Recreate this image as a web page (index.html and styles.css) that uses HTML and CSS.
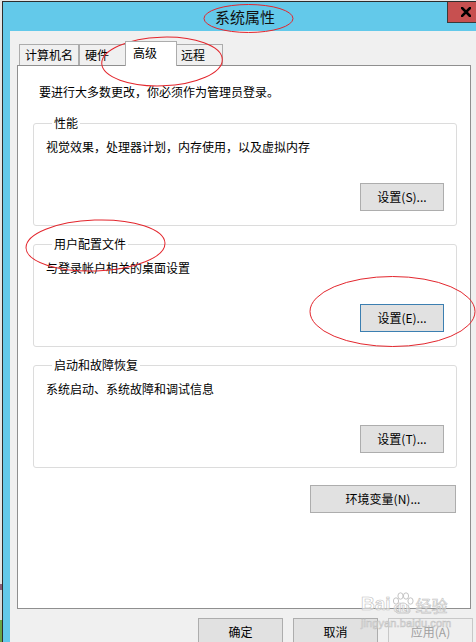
FILE: index.html
```html
<!DOCTYPE html>
<html lang="zh-CN">
<head>
<meta charset="utf-8">
<title>系统属性</title>
<link rel="stylesheet" href="styles.css">
</head>
<body>
<div class="screen">
  <div class="window">
    <div class="titlebar">
      <span class="title">系统属性</span>
      <div class="close">
        <svg width="10" height="10" viewBox="0 0 10 10"><path d="M1 1L9 9M9 1L1 9" stroke="#000" stroke-width="2.6" stroke-linecap="square"/></svg>
      </div>
    </div>
    <div class="client">
      <div class="tabs">
        <div class="tab t1">计算机名</div>
        <div class="tab t2">硬件</div>
        <div class="tab active">高级</div>
        <div class="tab t4">远程</div>
      </div>
      <div class="panel">
        <p class="note">要进行大多数更改，你必须作为管理员登录。</p>
        <fieldset class="group">
          <legend>性能</legend>
          <p class="desc">视觉效果，处理器计划，内存使用，以及虚拟内存</p>
          <div class="btnrow"><button class="btn">设置(S)...</button></div>
        </fieldset>
        <fieldset class="group">
          <legend>用户配置文件</legend>
          <p class="desc">与登录帐户相关的桌面设置</p>
          <div class="btnrow"><button class="btn focus">设置(E)...</button></div>
        </fieldset>
        <fieldset class="group">
          <legend>启动和故障恢复</legend>
          <p class="desc">系统启动、系统故障和调试信息</p>
          <div class="btnrow"><button class="btn">设置(T)...</button></div>
        </fieldset>
        <div class="envrow"><button class="btn env">环境变量(N)...</button></div>
      </div>
      <div class="actions">
        <button class="btn big">确定</button>
        <button class="btn big">取消</button>
        <button class="btn big disabled">应用(A)</button>
      </div>
    </div>
  </div>

  <div class="watermark">
    <div class="wm-top">
      <span class="wm-bai">Bai</span>
      <span class="wm-du">
        <svg class="paw" width="24" height="22" viewBox="0 0 24 22">
          <g fill="none" stroke="#c4c4c4" stroke-width="1">
            <ellipse cx="5" cy="9" rx="2.6" ry="3.2"/>
            <ellipse cx="9.5" cy="4" rx="2.6" ry="3.2"/>
            <ellipse cx="15" cy="4" rx="2.6" ry="3.2"/>
            <ellipse cx="19.5" cy="9" rx="2.6" ry="3.2"/>
            <path d="M12 11c-4 0-7 5-7 8 0 2 2 2.5 4 2h6c2 .5 4 0 4-2 0-3-3-8-7-8z"/>
          </g>
        </svg>
        <span class="du">du</span>
      </span>
      <span class="wm-jy">经验</span>
    </div>
    <div class="wm-url">jingyan.baidu.com</div>
  </div>

  <svg class="marks" width="476" height="642" viewBox="0 0 476 642">
    <g fill="none" stroke="#e3262d" stroke-width="1">
      <ellipse cx="248.5" cy="18.5" rx="44.5" ry="14"/>
      <ellipse cx="162" cy="61.5" rx="60.3" ry="24.3" transform="rotate(-2 162 61.5)"/>
      <ellipse cx="95.5" cy="245.5" rx="69.5" ry="25.5" transform="rotate(-2 95.5 245.5)"/>
      <ellipse cx="392.5" cy="311.5" rx="82.5" ry="35"/>
    </g>
  </svg>
</div>
</body>
</html>
```

FILE: styles.css
```css
* { box-sizing: border-box; }

html, body {
  margin: 0;
  padding: 0;
}

body {
  font-family: "Noto Sans CJK SC", "Noto Sans", sans-serif;
  font-size: 12px;
  color: #000;
}

.screen {
  position: relative;
  width: 476px;
  height: 642px;
  overflow: hidden;
  background: linear-gradient(to bottom, #e6e6e6 0, #e6e6e6 584px, #8b5f7a 584px, #8b5f7a 590px, #d9d9d9 590px, #d9d9d9 620px, #6aa544 620px);
}

.window {
  margin: 1px 0 0 2px;
  width: 486px;
  height: 700px;
  border: 1px solid #2d2d2d;
  background: #63c9ea;
  display: flex;
  flex-direction: column;
}

.titlebar {
  height: 29px;
  flex: none;
  display: grid;
  grid-template-columns: 1fr auto 1fr;
  align-items: center;
}

.title {
  grid-column: 2;
  font-size: 15px;
  line-height: 20px;
  color: #111;
}

.close {
  grid-column: 3;
  justify-self: end;
  align-self: start;
  width: 40px;
  height: 21px;
  background: #c75050;
  border-left: 1px solid #3a3a3a;
  border-bottom: 1px solid #3a3a3a;
  display: flex;
  align-items: center;
  justify-content: center;
  padding-right: 4px;
}

.close svg { display: block; }

.client {
  flex: 1;
  margin: 0 7px;
  background: #f0f0f0;
  padding-top: 10px;
}

/* Tabs */
.tabs {
  display: flex;
  align-items: flex-end;
  height: 24px;
  margin-left: 9px;
}

.tab {
  height: 21px;
  border: 1px solid #acacac;
  border-bottom: none;
  background: #f0f0f0;
  line-height: 19px;
  white-space: nowrap;
}

.t1 { width: 60px; padding-left: 5px; }
.t2 { width: 47px; padding-left: 5px; }
.t4 { width: 47px; padding-left: 4px; margin-left: -1px; }

.tab.active {
  position: relative;
  z-index: 1;
  width: 52px;
  height: 25px;
  margin-left: -1px;
  margin-bottom: -1px;
  padding-left: 7px;
  padding-top: 1px;
  background: #fff;
}

/* Panel */
.panel {
  margin-left: 7px;
  width: 454px;
  height: 544px;
  border: 1px solid #8f8f8f;
  background: #fff;
  padding-top: 18px;
}

.note {
  margin: 0 0 0 21px;
  line-height: 16px;
}

.group {
  margin: 15px 0 0 15px;
  width: 424px;
  border: 1px solid #dcdcdc;
  border-radius: 3px;
  padding: 8px 12px 14px 12px;
  min-inline-size: 0;
}

.group + .group { margin-top: 10px; }

.group legend {
  margin-left: 6px;
  padding: 0 2px;
  line-height: 16px;
  font-size: 12px;
}

.desc {
  margin: 0;
  line-height: 16px;
}

.btnrow {
  display: flex;
  justify-content: flex-end;
  margin-top: 28px;
}

.btn {
  width: 84px;
  height: 28px;
  padding: 0;
  border: 1px solid #adadad;
  background: #e1e1e1;
  font-family: inherit;
  font-size: 12px;
  color: #000;
  line-height: 16px;
  border-radius: 0;
}

.btn.focus { border-color: #3c7fb1; }

.envrow {
  margin: 17px 0 0 15px;
  width: 423px;
  display: flex;
  justify-content: flex-end;
}

.btn.env { width: 146px; }

.actions {
  margin: 9px 0 0 7px;
  width: 456px;
  display: flex;
  justify-content: flex-end;
  gap: 10px;
}

.btn.big { width: 85px; }

.btn.disabled {
  background: #efefef;
  border-color: #c8c8c8;
  color: #a0a0a0;
}

/* Watermark overlay */
.watermark {
  position: absolute;
  left: 361px;
  top: 586px;
  font-family: "Liberation Sans", Arial, sans-serif;
  color: rgba(255, 255, 255, 0.55);
  -webkit-text-stroke: 0.6px #c2c2c2;
}

.wm-top {
  display: flex;
  align-items: flex-end;
  height: 28px;
}

.wm-bai {
  font-size: 19px;
  font-weight: bold;
  line-height: 20px;
}

.wm-du {
  position: relative;
  display: inline-flex;
  flex-direction: column;
  align-items: center;
  width: 24px;
}

.paw { display: block; }

.du {
  position: absolute;
  bottom: 0;
  left: 3px;
  font-size: 13px;
  font-weight: bold;
  line-height: 12px;
}

.wm-jy {
  font-family: "Noto Sans CJK SC", sans-serif;
  font-size: 16px;
  line-height: 18px;
  margin-left: 1px;
}

.wm-url {
  font-size: 11px;
  line-height: 13px;
  margin-top: 3px;
  letter-spacing: 0.1px;
}

.marks {
  position: absolute;
  left: 0;
  top: 0;
  pointer-events: none;
}
```
